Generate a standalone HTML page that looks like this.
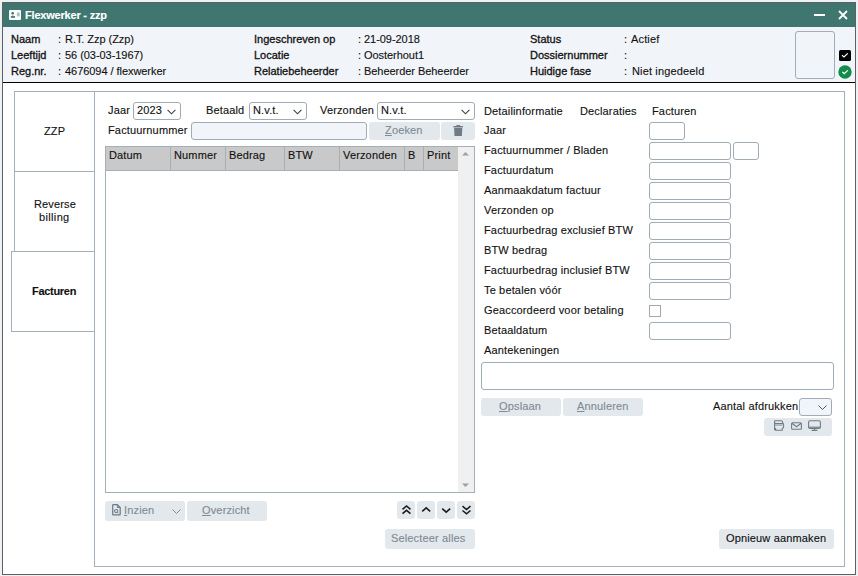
<!DOCTYPE html>
<html><head><meta charset="utf-8">
<style>
*{box-sizing:border-box;margin:0;padding:0}
html,body{width:858px;height:576px;overflow:hidden;background:#eef2f5;font-family:"Liberation Sans",sans-serif;font-size:11px;color:#111}
.a{position:absolute}
.t{position:absolute;white-space:nowrap;line-height:13px;font-size:11px;letter-spacing:0.15px;-webkit-text-stroke:0.12px currentColor}
.m{-webkit-text-stroke:0.3px #111;letter-spacing:0}
#win{position:absolute;left:2px;top:2px;width:854px;height:573px;border:1px solid #606060;background:#fff}
#title{position:absolute;left:3px;top:3px;width:852px;height:24px;background:#3f7770}
#hdr{position:absolute;left:3px;top:27px;width:852px;height:55px;background:#f1f4f8}
#hline{position:absolute;left:3px;top:82px;width:852px;height:1px;background:#000}
.box{position:absolute;border:1px solid #a3b0ba;background:#fff}
.inp{position:absolute;border:1px solid #a0acb6;border-radius:3px;background:#fff;height:18px}
.btn{position:absolute;background:#e3e8ec;border-radius:3px}
.dis{color:#7f8b95}
.u{text-decoration:underline;text-underline-offset:1px}
</style></head><body>
<div id="win"></div>
<div id="title"></div>
<div id="hdr"></div>
<div id="hline"></div>

<!-- title icon -->
<svg class="a" style="left:9px;top:10px" width="12" height="10" viewBox="0 0 12 10">
<rect x="0" y="0" width="12" height="10" rx="1" fill="#fff"/>
<circle cx="3.7" cy="3.3" r="1.3" fill="#3f7770"/>
<rect x="3.1" y="4.6" width="1.2" height="1.2" fill="#8fb0aa"/>
<rect x="1.8" y="6.1" width="4.2" height="1.7" fill="#3f7770"/>
<rect x="7.9" y="2.5" width="2.8" height="3.9" fill="#a8c4be"/>
</svg>
<div class="t" style="left:25px;top:9px;color:#fff;font-weight:bold;letter-spacing:-0.2px">Flexwerker - zzp</div>
<!-- min / close -->
<div class="a" style="left:814px;top:14px;width:11px;height:2px;background:#fff"></div>
<svg class="a" style="left:837px;top:9px" width="12" height="12" viewBox="0 0 12 12"><path d="M2 2L10 10M10 2L2 10" stroke="#fff" stroke-width="1.8"/></svg>

<!-- header rows -->
<div class="t m" style="left:11px;top:33px">Naam</div>
<div class="t m" style="left:11px;top:49px">Leeftijd</div>
<div class="t m" style="left:11px;top:65px">Reg.nr.</div>
<div class="t" style="left:58px;top:33px">:</div><div class="t" style="left:65px;top:33px;letter-spacing:-0.05px">R.T. Zzp (Zzp)</div>
<div class="t" style="left:58px;top:49px">:</div><div class="t" style="left:65px;top:49px;letter-spacing:-0.05px">56 (03-03-1967)</div>
<div class="t" style="left:58px;top:65px">:</div><div class="t" style="left:65px;top:65px;letter-spacing:-0.05px">4676094 / flexwerker</div>

<div class="t m" style="left:254px;top:33px">Ingeschreven op</div>
<div class="t m" style="left:254px;top:49px">Locatie</div>
<div class="t m" style="left:254px;top:65px">Relatiebeheerder</div>
<div class="t" style="left:358px;top:33px">:</div><div class="t" style="left:364px;top:33px;letter-spacing:-0.05px">21-09-2018</div>
<div class="t" style="left:358px;top:49px">:</div><div class="t" style="left:364px;top:49px;letter-spacing:-0.05px">Oosterhout1</div>
<div class="t" style="left:358px;top:65px">:</div><div class="t" style="left:364px;top:65px;letter-spacing:-0.05px">Beheerder Beheerder</div>

<div class="t m" style="left:530px;top:33px">Status</div>
<div class="t m" style="left:530px;top:49px">Dossiernummer</div>
<div class="t m" style="left:530px;top:65px">Huidige fase</div>
<div class="t" style="left:624px;top:33px">:</div><div class="t" style="left:631px;top:33px">Actief</div>
<div class="t" style="left:624px;top:49px">:</div>
<div class="t" style="left:624px;top:65px">:</div><div class="t" style="left:632px;top:65px">Niet ingedeeld</div>

<div class="a" style="left:795px;top:31px;width:40px;height:48px;border:1px solid #a0acb6;border-radius:3px"></div>
<svg class="a" style="left:839px;top:50px" width="12" height="11" viewBox="0 0 12 11"><rect width="12" height="11" rx="1.5" fill="#000"/><path d="M3 5.3L5 6.9L8.8 3.3" stroke="#fff" stroke-width="1.15" fill="none"/></svg>
<svg class="a" style="left:838px;top:65px" width="14" height="14" viewBox="0 0 14 14"><circle cx="7" cy="7" r="6.7" fill="#138c4b"/><path d="M4.3 7.1L6.3 8.6L9.8 5.4" stroke="#fff" stroke-width="1.2" fill="none"/></svg>

<!-- main panel -->
<div class="box" style="left:94px;top:91px;width:751px;height:476px"></div>
<!-- tabs -->
<div class="box" style="left:14px;top:91px;width:81px;height:81px"></div>
<div class="box" style="left:14px;top:171px;width:81px;height:81px"></div>
<div class="box" style="left:11px;top:251px;width:84px;height:81px"></div>
<div class="t" style="left:44px;top:125px">ZZP</div>
<div class="t" style="left:34px;top:198px">Reverse</div>
<div class="t" style="left:39px;top:211px;letter-spacing:0.35px">billing</div>
<div class="t" style="left:32px;top:285px;font-weight:bold;letter-spacing:-0.3px">Facturen</div>

<!-- filter row -->
<div class="t" style="left:108px;top:104px">Jaar</div>
<div class="inp" style="left:133px;top:102px;width:48px"></div>
<div class="t" style="left:137px;top:104px">2023</div>
<div class="t" style="left:206px;top:104px">Betaald</div>
<div class="inp" style="left:249px;top:102px;width:58px"></div>
<div class="t" style="left:253px;top:104px">N.v.t.</div>
<div class="t" style="left:320px;top:104px">Verzonden</div>
<div class="inp" style="left:377px;top:102px;width:98px"></div>
<div class="t" style="left:381px;top:104px">N.v.t.</div>
<svg class="a" style="left:167px;top:109px" width="9" height="6" viewBox="0 0 9 6"><path d="M0.6 0.9L4.5 4.8L8.4 0.9" stroke="#3a3a3a" stroke-width="1.05" fill="none"/></svg>
<svg class="a" style="left:293px;top:109px" width="9" height="6" viewBox="0 0 9 6"><path d="M0.6 0.9L4.5 4.8L8.4 0.9" stroke="#3a3a3a" stroke-width="1.05" fill="none"/></svg>
<svg class="a" style="left:461px;top:109px" width="9" height="6" viewBox="0 0 9 6"><path d="M0.6 0.9L4.5 4.8L8.4 0.9" stroke="#3a3a3a" stroke-width="1.05" fill="none"/></svg>

<div class="t" style="left:108px;top:124px">Factuurnummer</div>
<div class="inp" style="left:191px;top:122px;width:176px;background:#f1f4f8"></div>
<div class="btn" style="left:369px;top:122px;width:71px;height:18px"></div>
<div class="t dis" style="left:385px;top:124px"><span class="u">Z</span>oeken</div>
<div class="btn" style="left:441px;top:122px;width:34px;height:18px"></div>
<svg class="a" style="left:453px;top:125px" width="11" height="12" viewBox="0 0 11 12"><g fill="#6f7b85"><rect x="0.3" y="0.9" width="9.8" height="1.5" rx="0.6"/><rect x="3.3" y="0.1" width="3.8" height="1.2" rx="0.5"/><path d="M1.1 3.1H9.3L8.9 11H1.5Z"/></g></svg>

<!-- table -->
<div class="box" style="left:105px;top:146px;width:370px;height:347px"></div>
<div class="a" style="left:106px;top:147px;width:352px;height:24px;background:#c9c9c9;border-bottom:1px solid #a3b0ba"></div>
<div class="a" style="left:458px;top:147px;width:16px;height:345px;background:#f0f0f0"></div>
<div class="a" style="left:170px;top:147px;width:1px;height:23px;background:#a3b0ba"></div>
<div class="a" style="left:225px;top:147px;width:1px;height:23px;background:#a3b0ba"></div>
<div class="a" style="left:284px;top:147px;width:1px;height:23px;background:#a3b0ba"></div>
<div class="a" style="left:339px;top:147px;width:1px;height:23px;background:#a3b0ba"></div>
<div class="a" style="left:404px;top:147px;width:1px;height:23px;background:#a3b0ba"></div>
<div class="a" style="left:423px;top:147px;width:1px;height:23px;background:#a3b0ba"></div>
<div class="t" style="left:109px;top:149px">Datum</div>
<div class="t" style="left:174px;top:149px">Nummer</div>
<div class="t" style="left:229px;top:149px">Bedrag</div>
<div class="t" style="left:288px;top:149px">BTW</div>
<div class="t" style="left:343px;top:149px">Verzonden</div>
<div class="t" style="left:408px;top:149px">B</div>
<div class="t" style="left:427px;top:149px">Print</div>
<svg class="a" style="left:461px;top:151px" width="9" height="5" viewBox="0 0 9 5"><path d="M1 4.5L4.5 1L8 4.5Z" fill="#a0a0a0"/></svg>
<svg class="a" style="left:461px;top:483px" width="9" height="5" viewBox="0 0 9 5"><path d="M1 0.5L4.5 4L8 0.5Z" fill="#a0a0a0"/></svg>

<!-- below table -->
<div class="btn" style="left:105px;top:501px;width:80px;height:20px"></div>
<svg class="a" style="left:111px;top:503px" width="11" height="13" viewBox="0 0 11 13"><g stroke="#6f7b85" fill="none"><path d="M1.7 2.2Q1.7 1.6 2.3 1.6H6.2L9.2 4.6V11.2Q9.2 11.8 8.6 11.8H2.3Q1.7 11.8 1.7 11.2Z" stroke-width="1.25"/><path d="M6.3 1.6V4.5H9.2" stroke-width="1"/><circle cx="5.2" cy="8.1" r="1.6" stroke-width="1.1"/><path d="M6.3 9.2L7.4 10.3" stroke-width="1"/></g></svg>
<div class="t dis" style="left:124px;top:504px"><span class="u">I</span>nzien</div>
<svg class="a" style="left:172px;top:509px" width="9" height="5" viewBox="0 0 9 5"><path d="M0.5 0.5L4.5 4.5L8.5 0.5" stroke="#7f8b95" stroke-width="1" fill="none"/></svg>
<div class="btn" style="left:187px;top:501px;width:80px;height:20px"></div>
<div class="t dis" style="left:202px;top:504px"><span class="u">O</span>verzicht</div>

<div class="btn" style="left:397px;top:501px;width:18px;height:18px"></div>
<div class="btn" style="left:417px;top:501px;width:18px;height:18px"></div>
<div class="btn" style="left:437px;top:501px;width:18px;height:18px"></div>
<div class="btn" style="left:457px;top:501px;width:18px;height:18px"></div>
<svg class="a" style="left:401px;top:504px" width="11" height="11" viewBox="0 0 11 11"><path d="M1.5 5.3L5.5 2L9.5 5.3M1.5 9.6L5.5 6.3L9.5 9.6" stroke="#1c1c1c" stroke-width="1.6" fill="none"/></svg>
<svg class="a" style="left:421px;top:506px" width="11" height="7" viewBox="0 0 11 7"><path d="M1.2 5.4L5.2 1.9L9.2 5.4" stroke="#1c1c1c" stroke-width="1.6" fill="none"/></svg>
<svg class="a" style="left:441px;top:507px" width="11" height="7" viewBox="0 0 11 7"><path d="M1.2 1.6L5.2 5.1L9.2 1.6" stroke="#1c1c1c" stroke-width="1.6" fill="none"/></svg>
<svg class="a" style="left:461px;top:504px" width="11" height="11" viewBox="0 0 11 11"><path d="M1.5 2.2L5.5 5.5L9.5 2.2M1.5 6.5L5.5 9.8L9.5 6.5" stroke="#1c1c1c" stroke-width="1.6" fill="none"/></svg>

<div class="btn" style="left:385px;top:529px;width:90px;height:20px"></div>
<div class="t dis" style="left:391px;top:532px">Selecteer alles</div>

<!-- right panel -->
<div class="t" style="left:484px;top:105px">Detailinformatie</div>
<div class="t" style="left:580px;top:105px">Declaraties</div>
<div class="t" style="left:652px;top:105px">Facturen</div>

<div class="t" style="left:484px;top:124px">Jaar</div>
<div class="t" style="left:484px;top:144px">Factuurnummer / Bladen</div>
<div class="t" style="left:484px;top:164px">Factuurdatum</div>
<div class="t" style="left:484px;top:184px">Aanmaakdatum factuur</div>
<div class="t" style="left:484px;top:204px">Verzonden op</div>
<div class="t" style="left:484px;top:224px">Factuurbedrag exclusief BTW</div>
<div class="t" style="left:484px;top:244px">BTW bedrag</div>
<div class="t" style="left:484px;top:264px">Factuurbedrag inclusief BTW</div>
<div class="t" style="left:484px;top:284px">Te betalen vóór</div>
<div class="t" style="left:484px;top:304px">Geaccordeerd voor betaling</div>
<div class="t" style="left:484px;top:324px">Betaaldatum</div>
<div class="t" style="left:484px;top:344px">Aantekeningen</div>

<div class="inp" style="left:649px;top:122px;width:36px"></div>
<div class="inp" style="left:649px;top:142px;width:82px"></div>
<div class="inp" style="left:733px;top:142px;width:26px"></div>
<div class="inp" style="left:649px;top:162px;width:82px"></div>
<div class="inp" style="left:649px;top:182px;width:82px"></div>
<div class="inp" style="left:649px;top:202px;width:82px"></div>
<div class="inp" style="left:649px;top:222px;width:82px"></div>
<div class="inp" style="left:649px;top:242px;width:82px"></div>
<div class="inp" style="left:649px;top:262px;width:82px"></div>
<div class="inp" style="left:649px;top:282px;width:82px"></div>
<div class="a" style="left:649px;top:305px;width:12px;height:12px;border:1px solid #a8a8a8"></div>
<div class="inp" style="left:649px;top:322px;width:82px"></div>
<div class="inp" style="left:481px;top:362px;width:353px;height:28px"></div>

<div class="btn" style="left:481px;top:398px;width:80px;height:18px"></div>
<div class="t dis" style="left:499px;top:400px"><span class="u">O</span>pslaan</div>
<div class="btn" style="left:563px;top:398px;width:80px;height:18px"></div>
<div class="t dis" style="left:577px;top:400px"><span class="u">A</span>nnuleren</div>

<div class="inp" style="left:799px;top:398px;width:33px;background:#f1f4f8"></div>
<div class="t" style="left:713px;top:400px;letter-spacing:0.17px;background:#fff">Aantal afdrukken</div>
<svg class="a" style="left:818px;top:405px" width="9" height="5" viewBox="0 0 9 5"><path d="M0.5 0.5L4.5 4.5L8.5 0.5" stroke="#555" stroke-width="1" fill="none"/></svg>
<div class="btn" style="left:764px;top:418px;width:68px;height:18px"></div>
<svg class="a" style="left:772px;top:419px" width="52" height="14" viewBox="0 0 52 14">
<g stroke="#6f7b85" stroke-width="1.1" fill="none">
<path d="M2.6 1.8V11.2"/>
<path d="M2.6 1.8H9.3Q10.6 1.8 10.6 3.1V4.6"/>
<path d="M2.6 4.6H10.8Q11.6 4.6 11.6 5.4V8.2Q11.6 9 10.8 9H10.2"/>
<path d="M3 6.2H10.4" stroke="#9aa5ae"/>
<path d="M3.6 9V11.2H10.2V9"/>
<rect x="19.6" y="3.7" width="9.8" height="6.6" rx="1"/><path d="M19.9 4.2L24.5 7.7L29.1 4.2"/>
<rect x="36.6" y="1.8" width="11.8" height="7.6" rx="1.4"/><path d="M36.6 8.2H48.4"/><path d="M39.6 11.4H45.4M42.5 9.6V11.4"/>
</g></svg>

<div class="btn" style="left:719px;top:529px;width:115px;height:20px"></div>
<div class="t" style="left:726px;top:532px">Opnieuw aanmaken</div>
</body></html>
